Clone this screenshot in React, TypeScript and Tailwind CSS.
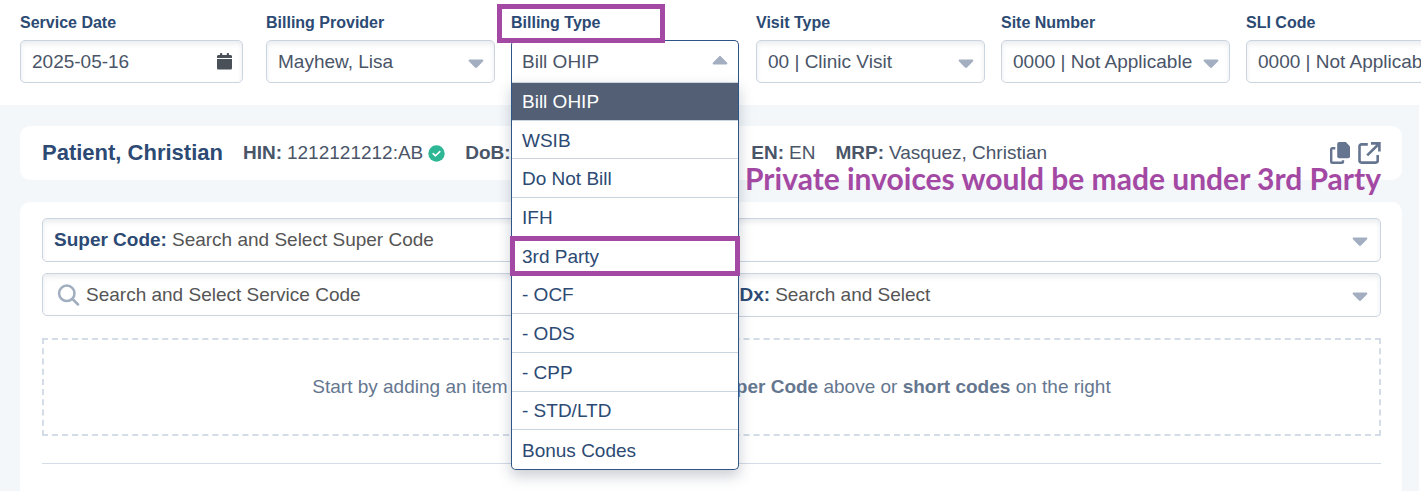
import { useState } from 'react'
import clsx from 'clsx'

const billingTypes = [
  'Bill OHIP',
  'WSIB',
  'Do Not Bill',
  'IFH',
  '3rd Party',
  '- OCF',
  '- ODS',
  '- CPP',
  '- STD/LTD',
  'Bonus Codes',
]

const fieldBox =
  'flex items-center rounded-[5px] border border-[#cbd5e0] bg-white shadow-[inset_0_3px_5px_rgba(45,65,95,0.10)]'
const control =
  'min-w-0 flex-1 appearance-none bg-transparent text-[19px] leading-6 outline-none'

function Caret({ up = false }: { up?: boolean }) {
  return (
    <svg
      className={clsx('pointer-events-none shrink-0', up ? 'mb-1 rotate-180' : 'mt-1')}
      width="16"
      height="10"
      viewBox="0 0 16 10"
      aria-hidden="true"
    >
      <path d="M1.6 .6h12.8c.9 0 1.3 1 .7 1.6L9 8.6c-.6.6-1.4.6-2 0L.9 2.2C.3 1.6.7.6 1.6.6z" fill="#a3aec0" />
    </svg>
  )
}

function CalendarIcon() {
  return (
    <svg width="15" height="17" viewBox="0 0 15 17" fill="#4a5058" className="shrink-0" aria-hidden="true">
      <path d="M3 .8C3 .4 3.3 0 3.8 0h.6c.5 0 .8.4.8.8V2h4.6V.8c0-.4.3-.8.8-.8h.6c.5 0 .8.4.8.8V2h1.4C14.3 2 15 2.600 15 3.400V5H0V3.400C0 2.600.7 2 1.600 2H3z" />
      <path d="M0 6h15v9c0 .9-.7 1.600-1.600 1.600H1.600C.7 16.600 0 15.900 0 15z" />
    </svg>
  )
}

function SearchIcon() {
  return (
    <svg width="23" height="22" viewBox="0 0 23 22" fill="none" stroke="#a0aec0" strokeWidth="2.500" strokeLinecap="round" className="shrink-0" aria-hidden="true">
      <circle cx="9.800" cy="9.300" r="7.700" />
      <path d="M15.500 15l5.500 5.500" />
    </svg>
  )
}

function VerifiedIcon() {
  return (
    <svg width="17" height="17" viewBox="0 0 17 17" className="shrink-0" aria-hidden="true">
      <circle cx="8.500" cy="8.500" r="8.200" fill="#2db795" />
      <path d="M5.200 8.600l2.300 2.200 4.300-4.200" fill="none" stroke="#fff" strokeWidth="1.600" strokeLinecap="round" strokeLinejoin="round" />
    </svg>
  )
}

function CopyIcon() {
  return (
    <svg width="20" height="22" viewBox="0 0 20 22" aria-hidden="true">
      <path d="M9.200 0h6.600L20 4.400V14.200a2 2 0 0 1-2 2H9.200a2 2 0 0 1-2-2V2a2 2 0 0 1 2-2z" fill="#65758f" />
      <path d="M5.300 6.200H2.500a1.300 1.300 0 0 0-1.300 1.300v12a1.300 1.300 0 0 0 1.300 1.300h9.200a1.300 1.300 0 0 0 1.300-1.300v-1.300" fill="none" stroke="#65758f" strokeWidth="2.400" />
    </svg>
  )
}

function ExternalIcon() {
  return (
    <svg width="23" height="22" viewBox="0 0 23 22" fill="none" stroke="#65758f" strokeWidth="2.600" aria-hidden="true">
      <path d="M9.800 2.400H3.500a2 2 0 0 0-2 2v14.200a2 2 0 0 0 2 2h14.200a2 2 0 0 0 2-2V13" strokeLinejoin="round" />
      <path d="M13 1.400h8.400v8.200M20.800 2L9.200 13.400" />
    </svg>
  )
}

function SelectField({ id, label, value }: { id: string; label: string; value: string }) {
  return (
    <div className="w-[229px] shrink-0">
      <label htmlFor={id} className="block text-base leading-5 font-bold text-[#2c4a73]">
        {label}
      </label>
      <div className={clsx(fieldBox, 'mt-[7px] h-[43px] pr-2.5 pl-[11px]')}>
        <select id={id} className={control} defaultValue={value}>
          <option>{value}</option>
        </select>
        <Caret />
      </div>
    </div>
  )
}

function BillingTypeField() {
  const [selected, setSelected] = useState('Bill OHIP')

  return (
    <div className="relative mr-px w-[228px] shrink-0">
      <label htmlFor="billing-type" className="relative block text-base leading-5 font-bold text-[#2c4a73]">
        Billing Type
        <span className="pointer-events-none absolute -top-[9px] -left-3.5 z-30 h-[39px] w-[168px] border-5 border-[#a349a4]" />
      </label>
      <div className="relative z-20 mt-[7px] flex h-[43px] items-center rounded-t-[5px] border border-b-0 border-[#2f5587] bg-white px-2.5">
        <select
          id="billing-type"
          className={control}
          value={selected}
          onChange={(e) => setSelected(e.target.value)}
        >
          {billingTypes.map((type) => (
            <option key={type}>{type}</option>
          ))}
        </select>
        <Caret up />
      </div>
      <ul
        role="listbox"
        aria-label="Billing Type"
        className="absolute top-[69px] left-0 z-20 grid h-[388px] w-full auto-rows-fr rounded-b-[5px] border border-t-0 border-[#2f5587] bg-white text-[19px] leading-6 text-[#2c4a73] shadow-[0_6px_14px_rgba(45,55,80,0.25)]"
      >
        {billingTypes.map((type) => (
          <li
            key={type}
            role="option"
            aria-selected={type === selected}
            className="relative border-b border-[#cbd5e0] first:border-t last:border-b-0"
          >
            <button
              type="button"
              onClick={() => setSelected(type)}
              className={clsx(
                'flex h-full w-full items-center px-2.5 pt-0.5 text-left',
                type === selected && 'bg-[#525f75] text-white'
              )}
            >
              {type}
            </button>
            {type === '3rd Party' && (
              <span className="pointer-events-none absolute -inset-x-0.5 -inset-y-px border-5 border-[#a349a4]" />
            )}
          </li>
        ))}
      </ul>
    </div>
  )
}

function PatientDetail({ label, children }: { label: string; children?: React.ReactNode }) {
  return (
    <div className="flex items-center gap-[5px] whitespace-nowrap">
      <b>{label}:</b>
      {children}
    </div>
  )
}

export default function App() {
  return (
    <div className="min-h-screen overflow-x-clip bg-white pr-0.5 font-['Liberation_Sans',Arial,sans-serif] text-[19px] leading-6 text-[#4a5568]">
      <div className="flex min-h-screen flex-col bg-[#f3f7fa]">
        {/* Billing fields */}
        <header className="-mr-0.5 flex gap-4 bg-white pt-[13px] pb-[22px] pl-5">
          <div className="w-[230px] shrink-0">
            <label htmlFor="service-date" className="block text-base leading-5 font-bold text-[#2c4a73]">
              Service Date
            </label>
            <div className={clsx(fieldBox, 'mt-[7px] mr-[7px] h-[43px] pr-2.5 pl-[11px]')}>
              <input id="service-date" type="text" className={control} defaultValue="2025-05-16" />
              <CalendarIcon />
            </div>
          </div>
          <SelectField id="provider" label="Billing Provider" value="Mayhew, Lisa" />
          <BillingTypeField />
          <SelectField id="visit-type" label="Visit Type" value="00 | Clinic Visit" />
          <SelectField id="site-number" label="Site Number" value="0000 | Not Applicable" />
          <SelectField id="sli-code" label="SLI Code" value="0000 | Not Applicable" />
        </header>

        <main className="flex flex-1 flex-col gap-[22px] pt-[21px] pr-[17px] pl-5">
          {/* Patient bar */}
          <section className="relative flex h-[54px] items-center gap-5 rounded-[10px] bg-white pr-[21px] pl-[22px]">
            <h1 className="text-[22px] font-bold whitespace-nowrap text-[#2c4a73]">Patient, Christian</h1>
            <PatientDetail label="HIN">
              1212121212:AB
              <VerifiedIcon />
            </PatientDetail>
            <div className="w-[266px]">
              <PatientDetail label="DoB" />
            </div>
            <PatientDetail label="EN">EN</PatientDetail>
            <PatientDetail label="MRP">Vasquez, Christian</PatientDetail>
            <div className="ml-auto flex gap-2">
              <button type="button" aria-label="Copy patient">
                <CopyIcon />
              </button>
              <button type="button" aria-label="Open patient chart">
                <ExternalIcon />
              </button>
            </div>
            <p className="absolute top-9 right-[21px] z-10 font-['Lato',sans-serif] text-[30px] leading-8 font-bold whitespace-nowrap text-[#a349a4]">
              Private invoices would be made under 3rd Party
            </p>
          </section>

          {/* Invoice items */}
          <section className="flex-1 rounded-t-[10px] bg-white pt-4 pr-[21px] pl-[22px]">
            <div className={clsx(fieldBox, 'h-11 gap-[5px] pr-3 pl-[11px]')}>
              <label htmlFor="super-code" className="font-bold text-[#2c4a73]">
                Super Code:
              </label>
              <select id="super-code" className={clsx(control, 'text-[#555]')}>
                <option>Search and Select Super Code</option>
              </select>
              <Caret />
            </div>
            <div className="mt-[11px] grid grid-cols-2 items-start gap-8">
              <div className={clsx(fieldBox, 'h-[43px] gap-1.5 px-3.5')}>
                <SearchIcon />
                <input
                  type="text"
                  aria-label="Service Code"
                  placeholder="Search and Select Service Code"
                  className={clsx(control, 'placeholder:text-[#555]')}
                />
              </div>
              <div className={clsx(fieldBox, 'h-11 gap-[5px] pr-3 pl-[11px]')}>
                <label htmlFor="dx" className="font-bold text-[#2c4a73]">
                  Dx:
                </label>
                <select id="dx" className={clsx(control, 'text-[#555]')}>
                  <option>Search and Select</option>
                </select>
                <Caret />
              </div>
            </div>
            <div className="mt-[21px] flex h-[98px] items-center justify-center border-2 border-dashed border-[#d3dce7] text-[#65778f]">
              <p>
                Start by adding an item using <b>Service Code</b> or <b>Super Code</b> above or <b>short codes</b> on
                the right
              </p>
            </div>
            <hr className="mt-[27px] border-[#d3dce7]" />
          </section>
        </main>
      </div>
    </div>
  )
}
